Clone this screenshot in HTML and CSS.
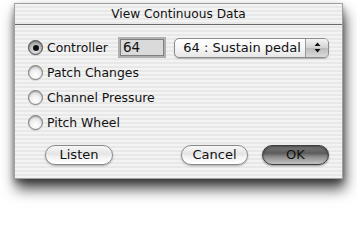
FILE: index.html
```html
<!DOCTYPE html>
<html>
<head>
<meta charset="utf-8">
<link rel="stylesheet" href="styles.css">
</head>
<body>
<div class="window">
  <div class="titlebar">View Continuous Data</div>
  <div class="content">
    <div class="row">
      <span class="radio checked"></span>
      <span class="label">Controller</span>
      <span class="field">64</span>
      <span class="popup">
        <span class="popup-text">64 : Sustain pedal</span>
        <span class="popup-arrows">
          <svg width="7" height="11" viewBox="0 0 7 11"><path d="M3.5 0.5 L6.5 4 L0.5 4 Z M3.5 10.5 L6.5 7 L0.5 7 Z" fill="#111"/></svg>
        </span>
      </span>
    </div>
    <div class="row"><span class="radio"></span><span class="label">Patch Changes</span></div>
    <div class="row"><span class="radio"></span><span class="label">Channel Pressure</span></div>
    <div class="row"><span class="radio"></span><span class="label">Pitch Wheel</span></div>
    <div class="buttons">
      <span class="btn listen">Listen</span>
      <span class="spacer"></span>
      <span class="btn">Cancel</span>
      <span class="btn default">OK</span>
    </div>
  </div>
</div>
</body>
</html>
```
FILE: styles.css
```css
html, body {
  margin: 0;
  padding: 0;
  background: #ffffff;
  height: 100%;
}
body {
  font-family: "DejaVu Sans", "Liberation Sans", sans-serif;
  font-size: 12.4px;
  color: #111;
  min-height: 203px;
  overflow: hidden;
}
.window {
  box-sizing: border-box;
  width: 329px;
  height: 176px;
  margin: 3px 0 0 14px;
  border: 1px solid #a0a0a0;
  background: repeating-linear-gradient(to bottom, #f3f3f3 0px, #f3f3f3 2px, #e8e8e8 2px, #e8e8e8 4px);
  box-shadow: 2px 10px 13px rgba(0,0,0,0.7), 0 3px 6px rgba(0,0,0,0.35);
  display: flex;
  flex-direction: column;
}
.titlebar {
  height: 20px;
  line-height: 20px;
  text-align: center;
  border-bottom: 1px solid #6a6a6a;
  font-size: 12.2px;
}
.content {
  padding: 10px 13px 0 13px;
  display: flex;
  flex-direction: column;
}
.row {
  height: 25px;
  display: flex;
  align-items: center;
}
.radio {
  box-sizing: border-box;
  width: 15px;
  height: 15px;
  border-radius: 50%;
  border: 1px solid #7a7a7a;
  background: radial-gradient(circle at 50% 72%, #ffffff 0%, #f2f2f2 40%, #c8c8c8 100%);
  box-shadow: inset 0 1px 1px rgba(0,0,0,0.25), 0 1px 1px rgba(0,0,0,0.12);
  position: relative;
  flex: none;
}
.radio.checked {
  background: radial-gradient(circle at 50% 72%, #e8e8e8 0%, #b8b8b8 55%, #8a8a8a 100%);
  border-color: #4a4a4a;
}
.radio.checked::after {
  content: "";
  position: absolute;
  left: 3.5px;
  top: 3.5px;
  width: 6px;
  height: 6px;
  border-radius: 50%;
  background: #111;
}
.label {
  margin-left: 4px;
}
.field {
  box-sizing: border-box;
  margin-left: 10px;
  width: 50px;
  height: 21px;
  line-height: 17px;
  padding-left: 3px;
  border: 2px solid #b0b0b0;
  background: #dadada;
  box-shadow: inset 0 0 0 1px #808080;
  font-size: 13.5px;
}
.popup {
  box-sizing: border-box;
  margin-left: 8px;
  width: 161px;
  height: 20px;
  border: 1px solid #8c8c8c;
  border-radius: 5px;
  background: linear-gradient(to bottom, #ffffff 0%, #f6f6f6 50%, #e6e6e6 100%);
  box-shadow: 0 1px 1px rgba(0,0,0,0.25);
  display: flex;
  overflow: hidden;
  font-size: 13px;
}
.popup-text {
  flex: 1;
  padding-left: 8px;
  line-height: 18px;
}
.popup-arrows {
  width: 22px;
  border-left: 1px solid #9a9a9a;
  background: linear-gradient(to bottom, #f4f4f4 0%, #d2d2d2 50%, #bcbcbc 51%, #dadada 100%);
  display: flex;
  align-items: center;
  justify-content: center;
}
.buttons {
  margin-top: 10px;
  display: flex;
  padding-left: 17px;
}
.spacer {
  flex: 1;
}
.btn {
  box-sizing: border-box;
  width: 67px;
  height: 20px;
  line-height: 18px;
  text-align: center;
  border: 1px solid #8a8a8a;
  border-radius: 10px;
  background: linear-gradient(to bottom, #f8f8f8 0%, #e4e4e4 45%, #f2f2f2 60%, #ffffff 100%);
  box-shadow: 0 1px 2px rgba(0,0,0,0.3), inset 0 -2px 3px rgba(255,255,255,0.8);
  margin-left: 14px;
  font-size: 13px;
}
.btn.listen {
  width: 68px;
  margin-left: 0;
}
.btn.default {
  border-color: #3e3e3e;
  background: linear-gradient(to bottom, #7a7a7a 0%, #5c5c5c 40%, #8c8c8c 60%, #c4c4c4 100%);
  box-shadow: 0 1px 2px rgba(0,0,0,0.4), inset 0 1px 2px rgba(0,0,0,0.4);
}
```
